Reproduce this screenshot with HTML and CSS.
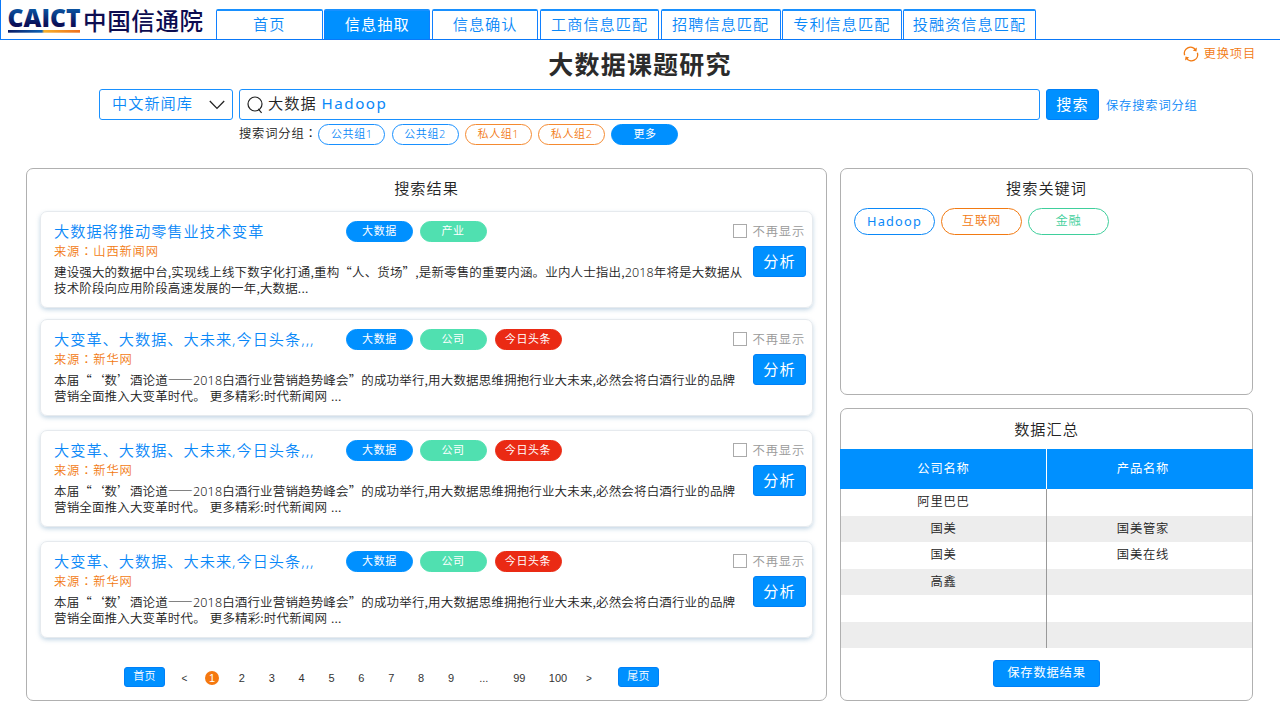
FILE: index.html
```html
<!DOCTYPE html>
<html lang="zh-CN">

<head>
    <meta charset="UTF-8">
    <meta name="viewport" content="width=device-width, initial-scale=1.0">
    <title>大数据课题研究</title>
    <link rel="stylesheet" href="styles.css">
</head>

<body>
    <header class="header">
        <svg class="logo" width="204" height="39" viewBox="0 0 204 39">
            <defs>
                <linearGradient id="logo-text" x1="0" y1="0" x2="0" y2="1">
                    <stop offset="0.2" stop-color="#0a5aa8" />
                    <stop offset="0.7" stop-color="#0a1058" />
                </linearGradient>
                <linearGradient id="logo-line" x1="0" y1="0" x2="1" y2="0">
                    <stop offset="0" stop-color="#0b1c66" />
                    <stop offset="0.47" stop-color="#0d62b4" />
                    <stop offset="0.5" stop-color="#f5b02c" />
                    <stop offset="1" stop-color="#f0701c" />
                </linearGradient>
            </defs>
            <text class="logo-en" x="-0.5" y="27" textLength="73" lengthAdjust="spacingAndGlyphs" fill="url(#logo-text)">CAICT</text>
            <rect x="0" y="30" width="72" height="2.7" fill="url(#logo-line)" />
            <text class="logo-cn" x="75" y="29.7" textLength="120" lengthAdjust="spacing">中国信通院</text>
        </svg>
        <nav class="tabs">
            <a class="tab" href="#">首页</a>
            <a class="tab active" href="#">信息抽取</a>
            <a class="tab" href="#">信息确认</a>
            <a class="tab wide" href="#">工商信息匹配</a>
            <a class="tab wide" href="#">招聘信息匹配</a>
            <a class="tab wide" href="#">专利信息匹配</a>
            <a class="tab wider" href="#">投融资信息匹配</a>
        </nav>
    </header>

    <div class="title-bar">
        <h1>大数据课题研究</h1>
        <a class="switch" href="#">
            <svg width="16" height="16" viewBox="0 0 16 16" fill="none" stroke="#f27a12" stroke-width="1.4">
                <path d="M1.6 9.2A6.2 6.2 0 0 1 12.6 3.8M14.4 6.8A6.2 6.2 0 0 1 3.4 12.2" />
                <path d="M13.9 1.4L13.5 5.6L9.8 4.4ZM2.1 14.6L2.5 10.4L6.2 11.6Z" fill="#f27a12" stroke="none" />
            </svg>
            更换项目
        </a>
    </div>

    <div class="search">
        <div class="select">
            <span>中文新闻库</span>
            <svg width="16" height="10" viewBox="0 0 16 10" fill="none" stroke="#222" stroke-width="1.3">
                <path d="M0.8 1L8 8.4L15.2 1" />
            </svg>
        </div>
        <div class="search-input">
            <svg width="17" height="18" viewBox="0 0 17 18" fill="none" stroke="#222" stroke-width="1.2">
                <circle cx="8" cy="8" r="7" />
                <path d="M11.2 12.8L14.6 16.8" />
            </svg>
            <span>大数据 <b>Hadoop</b></span>
        </div>
        <button class="btn search-btn">搜索</button>
        <a class="save-group" href="#">保存搜索词分组</a>
    </div>

    <div class="groups">
        <span class="groups-label">搜索词分组<span class="colon" lang="zh-TW">：</span></span>
        <span class="pill blue">公共组1</span>
        <span class="pill blue">公共组2</span>
        <span class="pill orange">私人组1</span>
        <span class="pill orange">私人组2</span>
        <span class="pill fill-blue">更多</span>
    </div>

    <main class="main">
        <section class="panel results">
            <h2>搜索结果</h2>

            <div class="card first">
                <div class="info">
                    <div class="card-head">
                        <h3>大数据将推动零售业技术变革</h3>
                        <span class="pill fill-blue">大数据</span>
                        <span class="pill fill-green">产业</span>
                    </div>
                    <p class="source">来源<span class="colon" lang="zh-TW">：</span>山西新闻网</p>
                    <p class="desc">建设强大的数据中台,实现线上线下数字化打通,重构“人、货场”,是新零售的重要内涵。业内人士指出,<span class="num">2018</span>年将是大数据从<br>技术阶段向应用阶段高速发展的一年,大数据...</p>
                </div>
                <div class="ops">
                    <label class="check"><i class="box"></i>不再显示</label>
                    <button class="btn">分析</button>
                </div>
            </div>

            <div class="card">
                <div class="info">
                    <div class="card-head">
                        <h3>大变革、大数据、大未来,今日头条,,,</h3>
                        <span class="pill fill-blue">大数据</span>
                        <span class="pill fill-green">公司</span>
                        <span class="pill fill-red">今日头条</span>
                    </div>
                    <p class="source">来源<span class="colon" lang="zh-TW">：</span>新华网</p>
                    <p class="desc">本届“‘数’酒论道——<span class="num">2018</span>白酒行业营销趋势峰会”的成功举行,用大数据思维拥抱行业大未来,必然会将白酒行业的品牌<br>营销全面推入大变革时代。 更多精彩:时代新闻网 ...</p>
                </div>
                <div class="ops">
                    <label class="check"><i class="box"></i>不再显示</label>
                    <button class="btn">分析</button>
                </div>
            </div>

            <div class="card">
                <div class="info">
                    <div class="card-head">
                        <h3>大变革、大数据、大未来,今日头条,,,</h3>
                        <span class="pill fill-blue">大数据</span>
                        <span class="pill fill-green">公司</span>
                        <span class="pill fill-red">今日头条</span>
                    </div>
                    <p class="source">来源<span class="colon" lang="zh-TW">：</span>新华网</p>
                    <p class="desc">本届“‘数’酒论道——<span class="num">2018</span>白酒行业营销趋势峰会”的成功举行,用大数据思维拥抱行业大未来,必然会将白酒行业的品牌<br>营销全面推入大变革时代。 更多精彩:时代新闻网 ...</p>
                </div>
                <div class="ops">
                    <label class="check"><i class="box"></i>不再显示</label>
                    <button class="btn">分析</button>
                </div>
            </div>

            <div class="card">
                <div class="info">
                    <div class="card-head">
                        <h3>大变革、大数据、大未来,今日头条,,,</h3>
                        <span class="pill fill-blue">大数据</span>
                        <span class="pill fill-green">公司</span>
                        <span class="pill fill-red">今日头条</span>
                    </div>
                    <p class="source">来源<span class="colon" lang="zh-TW">：</span>新华网</p>
                    <p class="desc">本届“‘数’酒论道——<span class="num">2018</span>白酒行业营销趋势峰会”的成功举行,用大数据思维拥抱行业大未来,必然会将白酒行业的品牌<br>营销全面推入大变革时代。 更多精彩:时代新闻网 ...</p>
                </div>
                <div class="ops">
                    <label class="check"><i class="box"></i>不再显示</label>
                    <button class="btn">分析</button>
                </div>
            </div>

            <div class="pager">
                <button class="btn">首页</button>
                <span class="page prev">&lt;</span>
                <span class="page"><b class="current">1</b></span>
                <span class="page">2</span>
                <span class="page">3</span>
                <span class="page">4</span>
                <span class="page">5</span>
                <span class="page">6</span>
                <span class="page">7</span>
                <span class="page">8</span>
                <span class="page">9</span>
                <span class="page more">...</span>
                <span class="page more">99</span>
                <span class="page hundred">100</span>
                <span class="page next">&gt;</span>
                <button class="btn">尾页</button>
            </div>
        </section>

        <div class="side">
            <section class="panel keywords">
                <h2>搜索关键词</h2>
                <div class="keyword-list">
                    <span class="keyword blue latin">Hadoop</span>
                    <span class="keyword orange">互联网</span>
                    <span class="keyword green">金融</span>
                </div>
            </section>

            <section class="panel summary">
                <h2>数据汇总</h2>
                <div class="table">
                    <div class="row head"><span>公司名称</span><span>产品名称</span></div>
                    <div class="row"><span>阿里巴巴</span><span></span></div>
                    <div class="row"><span>国美</span><span>国美管家</span></div>
                    <div class="row"><span>国美</span><span>国美在线</span></div>
                    <div class="row"><span>高鑫</span><span></span></div>
                    <div class="row"><span></span><span></span></div>
                    <div class="row"><span></span><span></span></div>
                </div>
                <button class="btn save-btn">保存数据结果</button>
            </section>
        </div>
    </main>
</body>

</html>
```
FILE: styles.css
```css
* {
    box-sizing: border-box;
}

body {
    margin: 0;
    height: 720px;
    overflow: hidden;
    background-color: #fff;
    font-family: "Noto Sans", "Noto Sans CJK SC", sans-serif;
    font-weight: 350;
    font-size: 12.3px;
    letter-spacing: 0.8px;
    color: #222;
    text-spacing-trim: space-all;
}

h1,
h2,
h3,
p {
    margin: 0;
}

a {
    text-decoration: none;
}

.colon {
    font-family: "Noto Sans CJK TC", sans-serif;
    line-height: 1;
}

.btn {
    width: 53px;
    height: 31px;
    padding: 0 0 2px;
    border: 1px solid #0080f8;
    border-radius: 3px;
    background-color: #0090ff;
    color: #fff;
    font-family: inherit;
    font-weight: 400;
    font-size: 15.2px;
    line-height: 26px;
    letter-spacing: 1px;
    text-align: center;
    cursor: pointer;
}

/* header */
.header {
    display: flex;
    align-items: flex-end;
    height: 40px;
    padding-left: 7px;
    border-left: 1px solid #0a78f8;
    border-bottom: 1px solid #0a78f8;
}

.logo {
    margin-right: 4px;
}

.logo-en {
    font-family: "Open Sans", sans-serif;
    font-weight: 800;
    font-size: 24px;
    letter-spacing: 0;
}

.logo-cn {
    font-family: "Noto Sans CJK SC", sans-serif;
    font-weight: 500;
    font-size: 23.5px;
    letter-spacing: 0;
    fill: #0c0c50;
}

.tabs {
    display: flex;
    gap: 1.3px;
}

.tab {
    width: 106.6px;
    height: 30px;
    border: 1px solid #1080ff;
    border-top: 2px solid #1890ff;
    border-bottom: none;
    border-radius: 2px 2px 0 0;
    color: #0a88f8;
    font-size: 15.2px;
    line-height: 26px;
    letter-spacing: 1px;
    text-align: center;
}

.tab.wide {
    width: 119.8px;
}

.tab.wider {
    width: 133px;
}

.tab.active {
    background-color: #0090ff;
    color: #fff;
    font-weight: 400;
}

.title-bar {
    display: grid;
    grid-template-columns: 1fr auto 1fr;
    height: 49px;
    padding-right: 24px;
    padding-left: 24px;
}

.title-bar h1 {
    grid-column: 2;
    font-weight: 700;
    font-size: 25px;
    line-height: 48px;
    letter-spacing: 1.2px;
    color: #2b2b2b;
}

.switch {
    display: flex;
    justify-content: flex-end;
    gap: 5px;
    padding-top: 6px;
    color: #f27a12;
    line-height: 16px;
}

/* search bar */
.search {
    display: flex;
    align-items: center;
    height: 31px;
    padding-left: 99px;
}

.select,
.search-input {
    display: flex;
    align-items: center;
    height: 31px;
    border: 1px solid #1890ff;
    border-radius: 3px;
    font-size: 15.2px;
    line-height: 27px;
    letter-spacing: 1px;
    white-space: nowrap;
}

.select span,
.search-input span {
    padding-bottom: 2px;
}

.select {
    justify-content: space-between;
    width: 134px;
    margin-right: 6px;
    padding: 0 7px 0 12px;
    color: #0a88f8;
}

.search-input {
    gap: 4px;
    width: 801px;
    margin-right: 6px;
    padding-left: 7px;
}

.search-input b {
    color: #0a88f8;
    font-weight: 400;
    letter-spacing: 1.5px;
}

.save-group {
    margin-left: 7px;
    color: #0a88f8;
}

.groups {
    display: flex;
    gap: 6.3px;
    height: 44px;
    padding: 4px 0 0 239px;
    line-height: 20px;
}

.groups-label {
    width: 73px;
    white-space: nowrap;
}

.pill {
    flex: none;
    width: 67px;
    height: 21px;
    border: 1px solid;
    border-radius: 11px;
    font-size: 11px;
    line-height: 18px;
    letter-spacing: 0.6px;
    text-align: center;
}

.blue {
    border-color: #1890ff;
    color: #0a88f8;
}

.orange {
    border-color: #f58a30;
    color: #f27a12;
}

.green {
    border-color: #52dfb0;
    color: #3fcf9c;
}

.fill-blue,
.fill-green,
.fill-red {
    color: #fff;
    font-weight: 400;
}

.fill-blue {
    border-color: #0090ff;
    background-color: #0090ff;
}

.fill-green {
    border-color: #50e0b0;
    background-color: #50e0b0;
}

.fill-red {
    border-color: #ea2a14;
    background-color: #ea2a14;
}

/* content */
.main {
    display: flex;
    gap: 13px;
    height: 533px;
    margin: 4px 26px 0;
}

.panel {
    border: 1px solid #b0b0b0;
    border-radius: 7px;
}

.panel h2 {
    height: 42px;
    font-weight: 350;
    font-size: 15.2px;
    line-height: 38px;
    letter-spacing: 1px;
    text-align: center;
}

.results {
    width: 801px;
    padding: 0 13px;
}

.card {
    display: flex;
    justify-content: space-between;
    height: 97px;
    margin-bottom: 14px;
    padding: 9px 6px 0 13px;
    border: 1px solid #e6eaee;
    border-radius: 7px;
    box-shadow: 0 2px 4px rgba(90, 140, 180, 0.35);
}

.card.first {
    margin-bottom: 11px;
}

.info {
    width: 670px;
}

.card-head {
    display: flex;
    gap: 6.5px;
    height: 21px;
}

.card-head h3 {
    width: 285.5px;
    color: #0a88f8;
    font-weight: 350;
    font-size: 15.2px;
    line-height: 20px;
    letter-spacing: 1px;
    white-space: nowrap;
}

.card-head .fill-red {
    margin-left: 1.5px;
}

.source {
    color: #f27a12;
    line-height: 19px;
}

.desc {
    padding-top: 3px;
    font-family: "Noto Sans CJK SC", sans-serif;
    font-size: 12.5px;
    line-height: 16px;
    letter-spacing: 0.15px;
    word-spacing: 1px;
    white-space: nowrap;
}

.num {
    font-family: "Noto Sans", sans-serif;
    line-height: 1;
}

.ops {
    display: flex;
    flex-direction: column;
    align-items: flex-end;
}

.check {
    display: flex;
    align-items: center;
    gap: 6px;
    height: 19px;
    margin: 0 1px 6px 0;
    color: #999;
    white-space: nowrap;
}

.box {
    width: 14px;
    height: 14px;
    border: 1px solid #aaa;
}

/* pagination */
.pager {
    display: flex;
    align-items: center;
    padding: 15px 0 0 84px;
    font-family: "Liberation Sans", "Noto Sans CJK SC", sans-serif;
    font-size: 11px;
    letter-spacing: 0;
}

.pager .btn {
    width: 41px;
    height: 20px;
    font-size: 11px;
    font-weight: 350;
    line-height: 16px;
    letter-spacing: 0.3px;
}

.page {
    width: 29.9px;
    padding-top: 2px;
    text-align: center;
    color: #333;
}

.page.prev {
    width: 32px;
    padding-left: 7px;
    font-size: 10px;
}

.page.more {
    width: 35.5px;
}

.page.hundred {
    width: 42px;
}

.page.next {
    width: 20px;
    margin-right: 19px;
    font-size: 10px;
}

.current {
    display: inline-block;
    width: 14px;
    height: 14px;
    border-radius: 50%;
    background-color: #f5780f;
    color: #fff;
    font-weight: 400;
    line-height: 14px;
}

/* right column */
.side {
    display: flex;
    flex-direction: column;
    gap: 13px;
    width: 413px;
}

.keywords {
    height: 227px;
}

.keyword-list {
    display: flex;
    gap: 6px;
    margin-top: -3px;
    padding-left: 13px;
}

.keyword {
    width: 81px;
    height: 27px;
    border: 1px solid;
    border-radius: 14px;
    line-height: 24px;
    text-align: center;
}

.keyword.latin {
    font-weight: 400;
    font-size: 12.8px;
    letter-spacing: 1.2px;
}

.summary {
    height: 293px;
    text-align: center;
}

.summary h2 {
    height: 40px;
    line-height: 40px;
}

.row {
    display: grid;
    grid-template-columns: 205px 1fr;
    height: 26.5px;
    line-height: 26px;
}

.row span + span {
    padding-right: 13px;
    border-left: 1px solid #999;
}

.row:nth-child(odd) {
    background-color: #ededed;
}

.row.head {
    height: 40px;
    margin: 0 -1px;
    padding: 0 1px;
    background-color: #0090ff;
    color: #fff;
    font-weight: 400;
    line-height: 39px;
}

.row.head span + span {
    border-left-color: #fff;
}

.save-btn {
    width: 107px;
    height: 27px;
    margin-top: 12px;
    font-size: 12.3px;
    line-height: 23px;
    letter-spacing: 0.8px;
}
```
